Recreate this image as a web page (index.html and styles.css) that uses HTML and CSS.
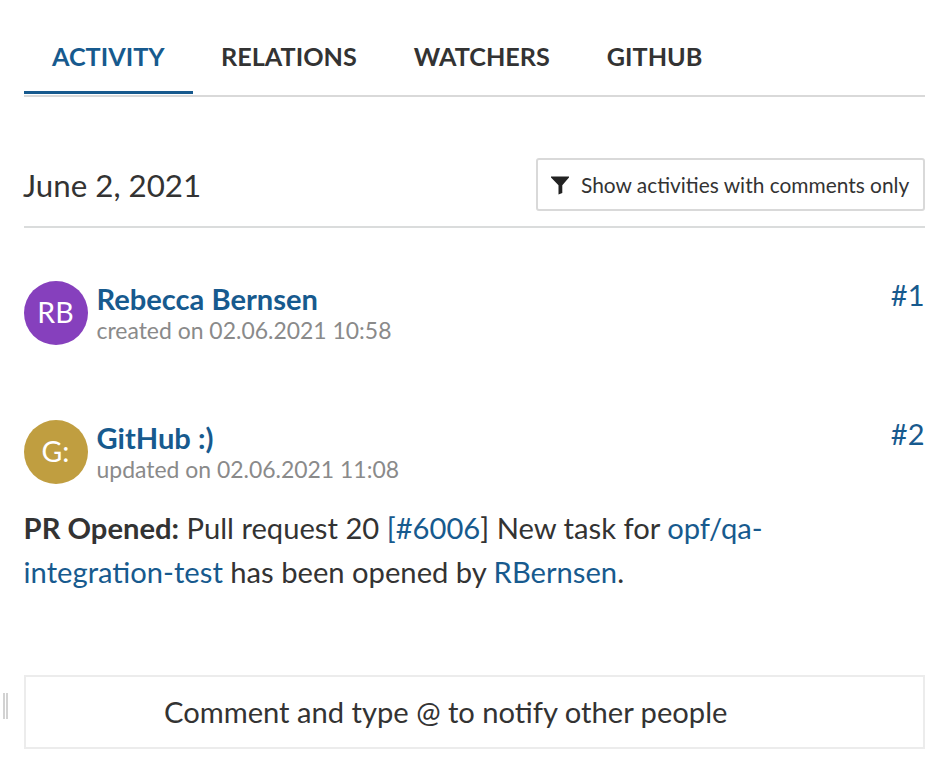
FILE: index.html
```html
<!DOCTYPE html>
<html lang="en">
<head>
<meta charset="utf-8">
<title>Activity</title>
<link rel="stylesheet" href="styles.css">
</head>
<body>
<nav class="tabs">
<a class="tab active"><span>ACTIVITY</span></a><a class="tab"><span>RELATIONS</span></a><a class="tab"><span>WATCHERS</span></a><a class="tab"><span>GITHUB</span></a>
</nav>
<header class="date-row">
<h2>June 2, 2021</h2>
<button class="filter"><svg width="19" height="19" viewBox="0 0 19 19"><path d="M0 .5H18V1.5L11.3 9.2V17L7.5 18.5V9.2L0 1.5Z" fill="#222"/></svg><span>Show activities with comments only</span></button>
</header>
<article class="entry">
<div class="avatar purple">RB</div>
<div class="meta"><div class="name">Rebecca Bernsen</div><div class="time">created on 02.06.2021 10:58</div></div>
<a class="num">#1</a>
</article>
<article class="entry second">
<div class="avatar gold">G:</div>
<div class="meta"><div class="name">GitHub :)</div><div class="time">updated on 02.06.2021 11:08</div></div>
<a class="num">#2</a>
</article>
<p class="message"><b>PR Opened:</b> Pull request 20 <a>[#6006</a>] New task for <a>opf/qa-<br>integration-test</a> has been opened by <a>RBernsen</a>.</p>
<footer class="comment-row"><span class="grip"></span><div class="comment">Comment and type @ to notify other people</div></footer>
</body>
</html>
```
FILE: styles.css
```css
* { box-sizing: border-box; }
body { margin: 0; padding: 20px 20px 0 24px; width: 945px; height: 783px; overflow: hidden; background: #fff; color: #333; font-family: Lato, sans-serif; }
a { color: #175a8e; }
.tabs { display: flex; height: 77px; border-bottom: 2px solid #d9d9d9; }
.tab { height: 74px; padding: 20px 28.5px 0; font-size: 25.2px; line-height: 32px; font-weight: 700; color: #333; white-space: nowrap; }
.tab.active { padding: 20px 28px 0; color: #175a8e; border-bottom: 3px solid #175a8e; }
.date-row { display: flex; justify-content: space-between; align-items: flex-start; margin-top: 61px; height: 70px; border-bottom: 2px solid #dadcdc; }
h2 { margin: 7px 0 0 -1px; font-size: 31.3px; line-height: 40px; font-weight: 400; }
.filter { display: flex; align-items: center; width: 389px; height: 53px; padding: 0 0 0 12.5px; gap: 11.5px; border: 2px solid #d9d9d9; border-radius: 3px; background: #fff; font: 20.9px Lato, sans-serif; color: #333; white-space: nowrap; }
.filter svg { flex: none; margin-top: 2px; }
.entry { display: flex; height: 64px; margin-top: 53px; }
.entry.second { margin-top: 75px; }
.avatar { width: 64px; height: 64px; border-radius: 50%; color: #fff; font-size: 28.5px; line-height: 63px; text-align: center; padding-right: 1px; }
.purple { background: #8640bd; }
.gold { background: #c09e40; }
.meta { margin-left: 8.5px; flex: 1; }
.name { color: #175a8e; font-weight: 700; font-size: 29.1px; line-height: 34px; margin-top: 1px; }
.time { color: #8a8a8a; font-size: 22.95px; line-height: 29px; }
.num { font-size: 29px; line-height: 32px; margin: -2px .5px 0 0; }
.message { margin: 22px 0 0 -.4px; font-size: 29.18px; line-height: 44px; white-space: nowrap; }
.comment-row { display: flex; align-items: flex-start; margin: 81px 0 0 -21px; }
.grip { width: 5px; height: 26px; margin: 18px 16px 0 0; border: solid #d2d2d2; border-width: 0 2px; }
.comment { width: 901px; height: 74px; padding-left: 138px; border: 2px solid #ececec; font-size: 29.15px; line-height: 70px; }
```
